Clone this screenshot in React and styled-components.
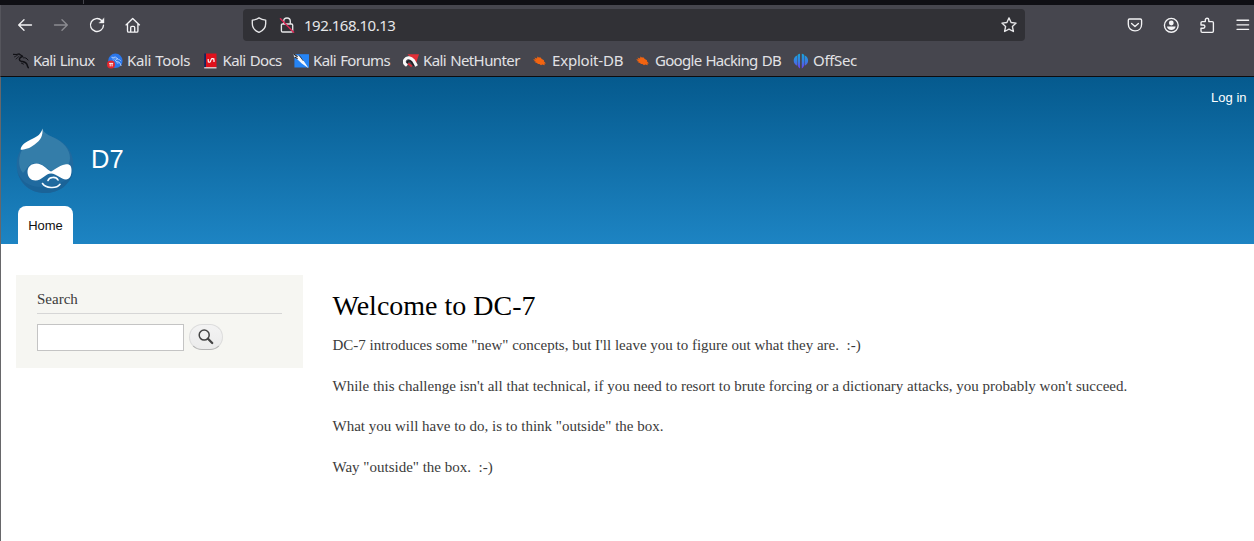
import React from 'react';
import styled, { createGlobalStyle } from 'styled-components';

const GlobalStyle = createGlobalStyle`
  * { box-sizing: border-box; }
  html, body { margin: 0; background: #fff; overflow: hidden; }
`;

const Window = styled.div`
  width: 1254px;
  height: 541px;
  display: flex;
  flex-direction: column;
  overflow: hidden;
`;

const TabStrip = styled.div`
  height: 5px;
  flex: none;
  padding-left: 83px;
  background: #0f0f14;
`;

const TabDivider = styled.div`
  width: 1px;
  height: 4px;
  background: #45454c;
`;

const Chrome = styled.div`
  height: 72px;
  flex: none;
  background: #46464e;
  border-bottom: 1px solid #0c0c0f;
  border-left: 1px solid #55555c;
  color: #f3f3f5;
  font-family: "Noto Sans", sans-serif;
`;

const Toolbar = styled.div`
  height: 40px;
  display: flex;
  align-items: center;
`;

const NavButtons = styled.div`
  display: flex;
  gap: 20px;
  padding-left: 16px;
  width: 242px;
`;

const Glyph = styled.svg`
  display: block;
  flex: none;
  width: 16px;
  height: 16px;
  fill: none;
  stroke: currentColor;
  stroke-width: 1.35;
  stroke-linecap: round;
  stroke-linejoin: round;
  opacity: ${(p) => (p.$dim ? 0.4 : 1)};
`;

const AddressBar = styled.div`
  width: 782px;
  height: 32px;
  padding: 0 8px;
  display: flex;
  align-items: center;
  border-radius: 4px;
  background: #313136;
  color: #e6e6e8;
`;

const Address = styled.span`
  flex: 1;
  margin-left: 9px;
  font-size: 15px;
  letter-spacing: -0.5px;
  line-height: 20px;
  white-space: nowrap;
`;

const LockSlot = styled.div`
  margin-left: 12px;
`;

const Actions = styled.div`
  display: flex;
  gap: 20px;
  margin-left: 102px;
`;

const Bookmarks = styled.div`
  height: 31px;
  display: flex;
  align-items: center;
  padding-left: 12px;
`;

const Bookmark = styled.div`
  width: ${(p) => p.$width}px;
  flex: none;
  display: flex;
  align-items: center;
  gap: 4px;
  font-size: 15px;
  letter-spacing: ${(p) => p.$tracking}px;
  word-spacing: 0.8px;
  line-height: 20px;
  color: #e2e2e5;
  white-space: nowrap;
`;

const BookmarkLabel = styled.span`
  margin-bottom: 1px;
`;

const Favicon = styled.svg`
  width: 16px;
  height: 16px;
  flex: none;
  display: block;
`;

const Page = styled.div`
  flex: 1;
  border-left: 1px solid #67676a;
  background: #fff;
`;

const Header = styled.header`
  height: 167px;
  display: flex;
  flex-direction: column;
  background: linear-gradient(#055a8e, #1d84c3);
  font-family: "Liberation Sans", sans-serif;
  color: #fff;
`;

const UserMenu = styled.nav`
  height: 50px;
  padding: 13px 7.5px 0 0;
  text-align: right;
  font-size: 13px;
  line-height: 16px;
`;

const Brand = styled.div`
  height: 79px;
  padding-left: 15px;
  display: flex;
`;

const Logo = styled.svg`
  width: 58px;
  height: 67px;
  display: block;
`;

const SiteName = styled.span`
  margin: 16px 0 0 17px;
  font-size: 25.5px;
  line-height: 32px;
`;

const HomeTab = styled.a`
  width: 55px;
  height: 38px;
  margin-left: 17px;
  border-radius: 8px 8px 0 0;
  background: #fff;
  color: #111;
  font-size: 13px;
  line-height: 39px;
  text-align: center;
`;

const Main = styled.main`
  display: flex;
  align-items: flex-start;
  padding: 30.5px 0 0 15px;
  font-family: "Liberation Serif", serif;
  color: #3b3b3b;
`;

const Sidebar = styled.aside`
  width: 286.5px;
  height: 93px;
  padding: 15.5px 20.5px 0 21px;
  background: #f6f6f2;
`;

const BlockTitle = styled.h2`
  height: 24px;
  margin: 0 0 10px;
  border-bottom: 1px solid #d6d6d6;
  font-size: 15px;
  font-weight: 400;
  line-height: 19px;
`;

const SearchForm = styled.form`
  display: flex;
  gap: 5px;
`;

const SearchInput = styled.input`
  width: 147px;
  height: 27px;
  padding: 4px;
  border: 1px solid #c4c4c4;
  background: #fff;
`;

const SearchButton = styled.button`
  width: 34px;
  height: 26px;
  padding: 0 1px 1px 0;
  display: flex;
  justify-content: center;
  align-items: center;
  border: 1px solid #dcdcdc;
  border-bottom-color: #b4b4b4;
  border-radius: 13px;
  background: linear-gradient(#f3f3f3, #ebebeb);
  color: #444;
`;

const Content = styled.article`
  margin-left: 30px;
  padding-top: 14.5px;
`;

const Title = styled.h1`
  margin: 0 0 11px;
  font-size: 28px;
  font-weight: 400;
  line-height: 34px;
  color: #000;
`;

const Paragraph = styled.p`
  margin: 0 0 18px;
  font-size: 15px;
  line-height: 22.5px;
  white-space: pre;
`;

const DragonMark = ({ color }) => (
  <g fill="none" stroke={color} strokeLinecap="round" strokeLinejoin="round">
    <path d="M.4 1.300 3.300 1.500 6.200.9 9.500 3.200" strokeWidth="1.200" />
    <path d="M1.400 3.900 4.400 2.300M3 6 6 3.400" strokeWidth=".8" />
    <path d="M9.500 3.600C6 4.500 5.400 7.400 8.200 8.200c2.700.7 4.900.8 5.700 3 .4 1.200.6 2.200 1.400 3.400" strokeWidth="1.500" />
    <path d="M10.500 4.800c1.600-.4 3.200.2 4.500 2.200M8.500 10.200l2 .9" strokeWidth="1" />
  </g>
);

const Spark = () => (
  <path fill="#f26411" d="m.9 6.300 2.900.2-1.500-2.100 2.800 1 .3-2 1.800 1.400.8-.7 1.800 1.800 2.200 1.400-.1 1 2 2.100-1.600.2.500 1.700-2.600-.7-1.200.6-1.600-1.200-1.600.1-.6-1.200-2.100-.5.600-.8-2.200-.7 1.300-.4z" />
);

const bookmarks = [
  { label: 'Kali Linux', width: 94, tracking: -0.68, icon: <DragonMark color="#111116" /> },
  {
    label: 'Kali Tools',
    width: 95.5,
    tracking: -0.36,
    icon: (
      <>
        <circle cx="8.400" cy="7.800" r="7.200" fill="#2b77eb" />
        <g transform="translate(4.500 3.500) scale(.62)"><DragonMark color="#cfe2ff" /></g>
        <circle cx="4" cy="11.600" r="4" fill="#e3262e" />
        <path d="M2.100 10.400h4M3.200 10.400v3M5.100 10.400v3" stroke="#fff" fill="none" strokeWidth=".9" />
      </>
    ),
  },
  {
    label: 'Kali Docs',
    width: 90.5,
    tracking: -0.6,
    icon: (
      <>
        <path d="M1.200.500h2v14h-2z" fill="#16235f" />
        <path d="M3 .500h10.500v14H3z" fill="#e0111c" />
        <path d="M1.200 14.200h12.300v1.200H1.200z" fill="#f3e5e7" />
        <path d="M5.200 6v2.200c0 1.400 2 1.400 2.300.1l.6-1.700C8.600 5.200 11 5.400 11 7v2M4.800 9h1M10.400 5.800h1" fill="none" stroke="#fff" strokeWidth="1.200" />
      </>
    ),
  },
  {
    label: 'Kali Forums',
    width: 110,
    tracking: -0.6,
    icon: (
      <>
        <path d="M1.400 1.200h14.800v13.300H1.400z" fill="#2584f5" />
        <path d="m.6.9 5.500 2 4.300 4.600 5.200 7.700-6.800-4.600-4-3.900L1 4z" fill="#f7f9fc" />
        <path d="m1 1.300 3.600 2.500M1.600 4l3 1.700" stroke="#25262b" strokeWidth="1.200" fill="none" />
        <path d="m6.300 2.500 4 5.400" stroke="#25262b" strokeWidth=".8" />
      </>
    ),
  },
  {
    label: 'Kali NetHunter',
    width: 129,
    tracking: -0.6,
    icon: (
      <>
        <path d="M4.500 1.200H16l-3 9z" fill="#e22f37" />
        <path d="m4 12.700-1.700-1.500C-.2 8.300 2.500 4.300 6 4.700c2.100.3 3.300 1.400 4.600 2.900l3 5.300" fill="none" stroke="#f8f8f8" strokeWidth="3" />
        <path d="M4.300 10C4.200 7.900 6.600 7 8.300 8.800l2.500 4" fill="none" stroke="#1d1d22" strokeWidth="1.300" />
        <path d="m5.200 10.500 3.600 3" stroke="#dc2936" strokeWidth="2" />
      </>
    ),
  },
  { label: 'Exploit-DB', width: 103, tracking: -0.2, icon: <Spark /> },
  { label: 'Google Hacking DB', width: 158, tracking: -0.7, icon: <Spark /> },
  {
    label: 'OffSec',
    width: 70,
    tracking: -0.33,
    icon: (
      <>
        <defs>
          <linearGradient id="offsec" x1="0" y1="0" x2="0" y2="1">
            <stop offset="0" stopColor="#16a5dc" />
            <stop offset=".55" stopColor="#3a7ae4" />
            <stop offset="1" stopColor="#6b3ff0" />
          </linearGradient>
        </defs>
        <path fill="url(#offsec)" d="M7 .8v14.700C5.500 14.800 4.600 13 4.600 11V1.900C5.300 1.300 6.100.9 7 .8zM4.100 2.500v10.200C1.800 11.500.7 10 .7 7.600c0-2.200 1.200-4.200 3.400-5.100zM8.800.8v14.700c1.500-.7 2.400-2.500 2.400-4.500V1.900C10.500 1.300 9.700.9 8.800.8zM11.700 2.500v10.200c2.300-1.200 3.400-2.700 3.400-5.100 0-2.200-1.200-4.200-3.400-5.100z" />
      </>
    ),
  },
];

const paragraphs = [
  'DC-7 introduces some "new" concepts, but I\'ll leave you to figure out what they are.  :-)',
  "While this challenge isn't all that technical, if you need to resort to brute forcing or a dictionary attacks, you probably won't succeed.",
  'What you will have to do, is to think "outside" the box.',
  'Way "outside" the box.  :-)',
];

export default function App() {
  return (
    <Window>
      <GlobalStyle />
      <TabStrip><TabDivider /></TabStrip>
      <Chrome>
        <Toolbar>
          <NavButtons>
            <Glyph viewBox="0 0 16 16"><path d="M14.500 8H2M7 2.800 1.700 8 7 13.200" /></Glyph>
            <Glyph viewBox="0 0 16 16" $dim><path d="M1.500 8H14M9 2.800 14.300 8 9 13.200" /></Glyph>
            <Glyph viewBox="0 0 16 16"><path d="M14.500 8.200A6.500 6.500 0 1 1 12.600 3.400L14 4.800" /><path d="M15 1.200v4.800h-4.800z" fill="currentColor" strokeWidth=".4" /></Glyph>
            <Glyph viewBox="0 0 16 16"><path d="M1 7.900 7.700 1.500l6.800 6.400M2.500 6.700v7.200c0 .8.4 1.200 1.200 1.200h8c.8 0 1.200-.4 1.200-1.200V6.700M5.700 14.800v-4.200C5.700 9.800 6.100 9.300 6.900 9.300h1.600c.8 0 1.200.5 1.200 1.300v4.200" /></Glyph>
          </NavButtons>
          <AddressBar>
            <Glyph viewBox="0 0 16 16"><path d="M8 .9c2 1.400 4.200 2 6.700 2.200V6.500c0 4.400-2.900 7.400-6.700 8.900-3.800-1.500-6.700-4.500-6.700-8.900V3.100C3.800 2.900 6 2.300 8 .9z" /></Glyph>
            <LockSlot>
              <Glyph viewBox="0 0 16 16">
                <path d="M4.700 7V4.300C4.700 2.200 6 1 8 1s3.300 1.200 3.300 3.300V7M3.600 7h8.900c.8 0 1.200.4 1.200 1.200v5.600c0 .8-.4 1.200-1.200 1.200H3.600c-.8 0-1.200-.4-1.200-1.200V8.200C2.400 7.400 2.800 7 3.600 7z" />
                <path d="M1.500 1.800 14.600 15.300" stroke="#d72654" strokeWidth="1.500" />
              </Glyph>
            </LockSlot>
            <Address>192.168.10.13</Address>
            <Glyph viewBox="0 0 16 16"><path d="m8 .9 2.100 4.600 5 .6-3.700 3.400 1 5L8 12.100l-4.400 2.400 1-5L.9 6.100l5-.6z" /></Glyph>
          </AddressBar>
          <Actions>
            <Glyph viewBox="0 0 16 16"><path d="M2.500 2h10.800c1 0 1.300.5 1.300 1.300v3.900c0 4-2.700 6.700-6.600 6.700S1.300 11.200 1.300 7.200V3.300C1.300 2.500 1.700 2 2.500 2zM4.600 6.500 8 9.500l3.400-3" /></Glyph>
            <Glyph viewBox="0 0 16 16"><circle cx="8.300" cy="8.300" r="6.900" /><circle cx="8.300" cy="6" r="2.400" fill="currentColor" stroke="none" /><path d="M4 9.500h8.600C12.400 11.700 10.700 12.900 8.300 12.900S4.200 11.700 4 9.500z" fill="currentColor" stroke="none" /></Glyph>
            <Glyph viewBox="0 0 16 16"><path d="M6.300 4.600V3C6.300.6 9.800.6 9.800 3v1.600h3.400c.8 0 1.200.4 1.200 1.200v8.300c0 .8-.4 1.200-1.200 1.200H3.200c-.8 0-1.200-.4-1.200-1.200v-2.900h2.200c2.300 0 2.300-3.200 0-3.200H2V5.800c0-.8.400-1.200 1.200-1.200z" /></Glyph>
            <Glyph viewBox="0 0 16 16"><path d="M2 3.200h11.600M2 7.800h11.600M2 12.300h11.600" /></Glyph>
          </Actions>
        </Toolbar>
        <Bookmarks>
          {bookmarks.map((b) => (
            <Bookmark key={b.label} $width={b.width} $tracking={b.tracking}>
              <Favicon viewBox="0 0 16 16">{b.icon}</Favicon>
              <BookmarkLabel>{b.label}</BookmarkLabel>
            </Bookmark>
          ))}
        </Bookmarks>
      </Chrome>
      <Page>
        <Header>
          <UserMenu>Log in</UserMenu>
          <Brand>
            <Logo viewBox="0 0 58 67">
              <path d="M26.500 2c-1 7-7 9-14 13C5 20 .7 28 .7 37.500c0 17 12 28.500 28.300 28.500s28.300-11.500 28.300-28.500C57.300 21 45 13.500 38 10.500 31 7.500 28 6 26.500 2z" fill="#206a9f" />
              <path d="M26.500 2c1.500 4 5.500 6 11 8.500C47 15 54 22 54 31c0 9-8 13-16 13-7 0-10-8-18-8-7 0-9 6-13 10C1 39 3 28 6 23c11-3 20-8 20.500-21z" fill="#347da9" />
              <path d="M1 43c3 11 12 17 25 17 14 0 26-6 31-15C54 58 43 66 29 66S4 57 1 43z" fill="#1a6398" />
              <path d="M26.500 1.500c-1.500 5.500-5 8-10.500 10.500C9 15 4.500 19 4.700 22.700c4 0 9-1.200 14-5.200 6-4.500 8.300-8.500 7.800-16z" fill="#fff" />
              <path d="M35 44.500c4-2 8-6 14-7 5-1 6.500 1.500 6.500 5.500 0 6-2 9.500-5.500 9.500-5 0-9.500-6-15-6s-9 7-15.500 7c-4.500 0-8-3.500-8-8.500s3.500-8.500 9-8.500c6 0 9.500 5.500 14.500 8z" fill="#fff" />
              <path d="M32 53.500c1-3.500 8-4.500 10-.5M26.500 56.500c3 4.800 14 5.500 17.500.8" fill="none" stroke="#f5fbff" strokeWidth="1.600" strokeLinecap="round" />
            </Logo>
            <SiteName>D7</SiteName>
          </Brand>
          <HomeTab>Home</HomeTab>
        </Header>
        <Main>
          <Sidebar>
            <BlockTitle>Search</BlockTitle>
            <SearchForm>
              <SearchInput aria-label="Search" />
              <SearchButton type="button" aria-label="Search">
                <Glyph viewBox="0 0 16 16"><circle cx="6.200" cy="6.100" r="5" strokeWidth="1.500" /><path d="m10 9.800 4.200 4.200" strokeWidth="2.300" /></Glyph>
              </SearchButton>
            </SearchForm>
          </Sidebar>
          <Content>
            <Title>Welcome to DC-7</Title>
            {paragraphs.map((text) => <Paragraph key={text}>{text}</Paragraph>)}
          </Content>
        </Main>
      </Page>
    </Window>
  );
}
